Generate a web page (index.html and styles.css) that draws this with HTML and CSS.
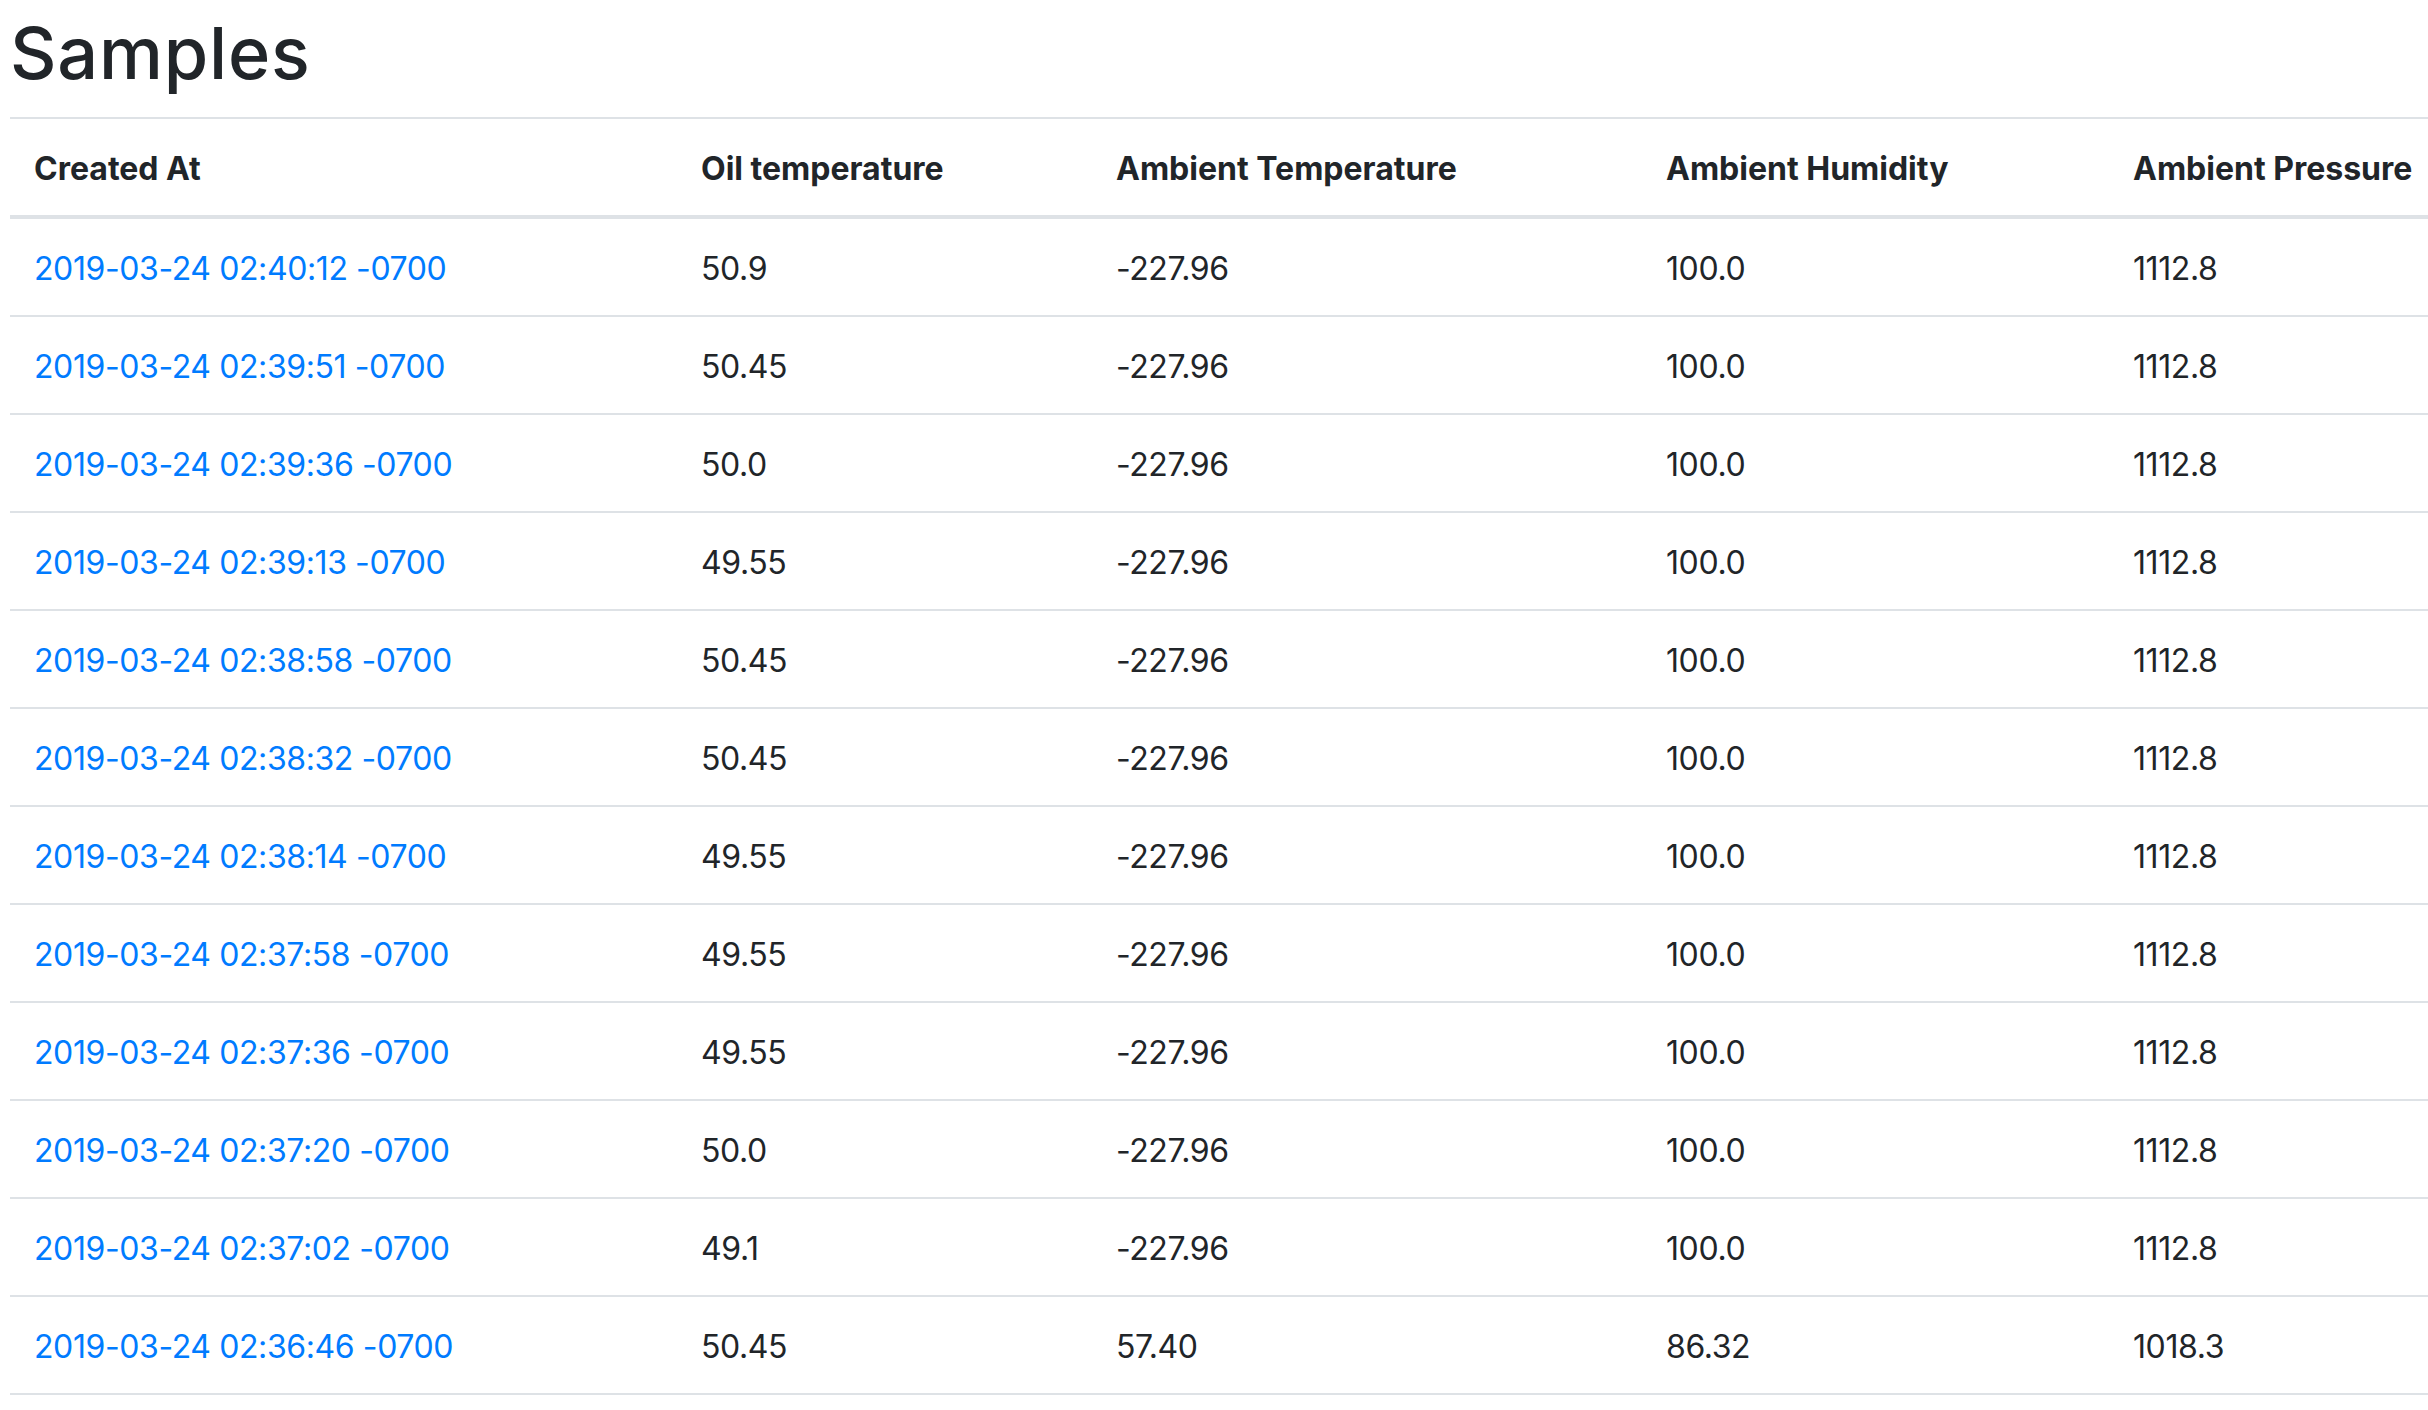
FILE: index.html
```html
<!DOCTYPE html>
<html lang="en">
<head>
<meta charset="utf-8">
<title>Samples</title>
<link rel="stylesheet" href="styles.css">
</head>
<body>
<main class="page">
  <h1 class="page-title">Samples</h1>
  <table class="samples">
    <colgroup>
      <col class="c-created">
      <col class="c-oil">
      <col class="c-temp">
      <col class="c-hum">
      <col class="c-press">
    </colgroup>
    <thead>
      <tr>
        <th>Created At</th>
        <th>Oil temperature</th>
        <th>Ambient Temperature</th>
        <th>Ambient Humidity</th>
        <th>Ambient Pressure</th>
      </tr>
    </thead>
    <tbody>
      <tr><td><a href="#">2019-03-24 02:40:12 -0700</a></td><td>50.9</td><td>-227.96</td><td>100.0</td><td>1112.8</td></tr>
      <tr><td><a href="#">2019-03-24 02:39:51 -0700</a></td><td>50.45</td><td>-227.96</td><td>100.0</td><td>1112.8</td></tr>
      <tr><td><a href="#">2019-03-24 02:39:36 -0700</a></td><td>50.0</td><td>-227.96</td><td>100.0</td><td>1112.8</td></tr>
      <tr><td><a href="#">2019-03-24 02:39:13 -0700</a></td><td>49.55</td><td>-227.96</td><td>100.0</td><td>1112.8</td></tr>
      <tr><td><a href="#">2019-03-24 02:38:58 -0700</a></td><td>50.45</td><td>-227.96</td><td>100.0</td><td>1112.8</td></tr>
      <tr><td><a href="#">2019-03-24 02:38:32 -0700</a></td><td>50.45</td><td>-227.96</td><td>100.0</td><td>1112.8</td></tr>
      <tr><td><a href="#">2019-03-24 02:38:14 -0700</a></td><td>49.55</td><td>-227.96</td><td>100.0</td><td>1112.8</td></tr>
      <tr><td><a href="#">2019-03-24 02:37:58 -0700</a></td><td>49.55</td><td>-227.96</td><td>100.0</td><td>1112.8</td></tr>
      <tr><td><a href="#">2019-03-24 02:37:36 -0700</a></td><td>49.55</td><td>-227.96</td><td>100.0</td><td>1112.8</td></tr>
      <tr><td><a href="#">2019-03-24 02:37:20 -0700</a></td><td>50.0</td><td>-227.96</td><td>100.0</td><td>1112.8</td></tr>
      <tr><td><a href="#">2019-03-24 02:37:02 -0700</a></td><td>49.1</td><td>-227.96</td><td>100.0</td><td>1112.8</td></tr>
      <tr><td><a href="#">2019-03-24 02:36:46 -0700</a></td><td>50.45</td><td>57.40</td><td>86.32</td><td>1018.3</td></tr>
    </tbody>
  </table>
</main>
</body>
</html>
```

FILE: styles.css
```css
html, body {
  margin: 0;
  padding: 0;
  background: #ffffff;
}

body {
  font-family: Inter, "Noto Sans", "Liberation Sans", sans-serif;
  color: #212529;
  font-size: 32px;
}

.page {
  padding: 10px 0 0 10px;
}

.page-title {
  margin: 0 0 21px 0;
  font-size: 72px;
  line-height: 1.2;
  font-weight: 500;
  letter-spacing: 0.8px;
  color: #212529;
}

.samples {
  width: 2418px;
  table-layout: fixed;
  border-collapse: collapse;
}

.c-created { width: 667px; }
.c-oil { width: 415px; }
.c-temp { width: 550px; }
.c-hum { width: 467px; }
.c-press { width: auto; }

.samples th,
.samples td {
  padding: 26px 24px 22px 24px;
  line-height: 48px;
  font-size: 32px;
  text-align: left;
  vertical-align: top;
  border-top: 2px solid #dee2e6;
  white-space: nowrap;
}

.samples td {
  letter-spacing: -0.4px;
}

.samples th {
  font-weight: 700;
  vertical-align: bottom;
  border-bottom: 4px solid #dee2e6;
}

.samples tbody tr:last-child td {
  border-bottom: 2px solid #dee2e6;
}

.samples a {
  color: #007bff;
  text-decoration: none;
}
```
